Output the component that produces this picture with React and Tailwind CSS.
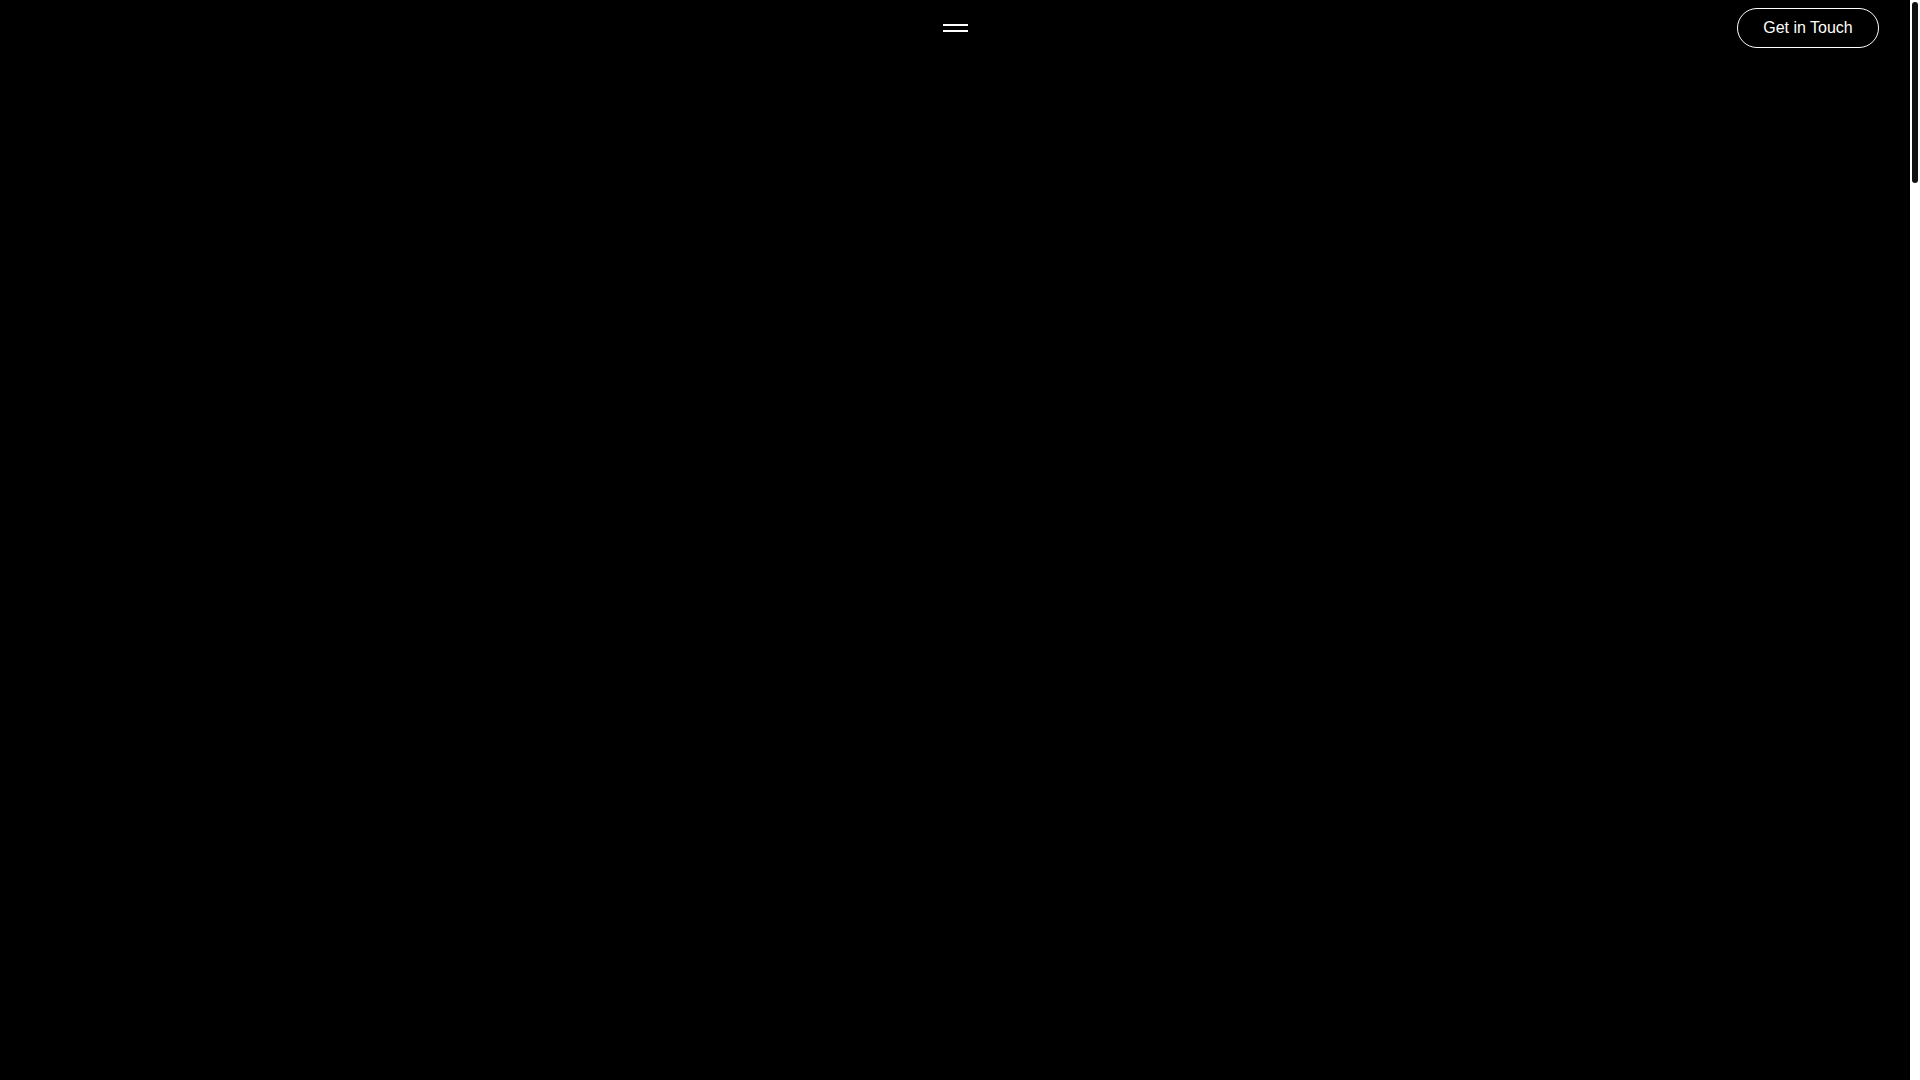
export default function App() {
  return (
    <div
      className="flex h-screen w-full overflow-hidden bg-black"
      style={{ fontFamily: '"Liberation Sans", Arial, sans-serif' }}
    >
      <main className="min-w-0 flex-1 bg-black">
        <header className="grid grid-cols-3 items-center pt-2 pl-8 pr-[31px]">
          <div />
          <div className="flex justify-center">
            <button className="flex h-10 w-10 flex-col items-center justify-center gap-1" aria-label="Menu">
              <span className="block h-[2px] w-[25px] bg-white" />
              <span className="block h-[2px] w-[25px] bg-white" />
            </button>
          </div>
          <div className="flex justify-end">
            <a
              href="#"
              className="flex h-10 w-[142px] items-center justify-center rounded-full border border-white text-[16px] text-white"
            >
              Get in Touch
            </a>
          </div>
        </header>
      </main>
      <aside className="flex w-[10px] shrink-0 justify-center bg-white pt-[2px]">
        <div className="h-[181px] w-[6px] rounded-full bg-[#111]" />
      </aside>
    </div>
  );
}
